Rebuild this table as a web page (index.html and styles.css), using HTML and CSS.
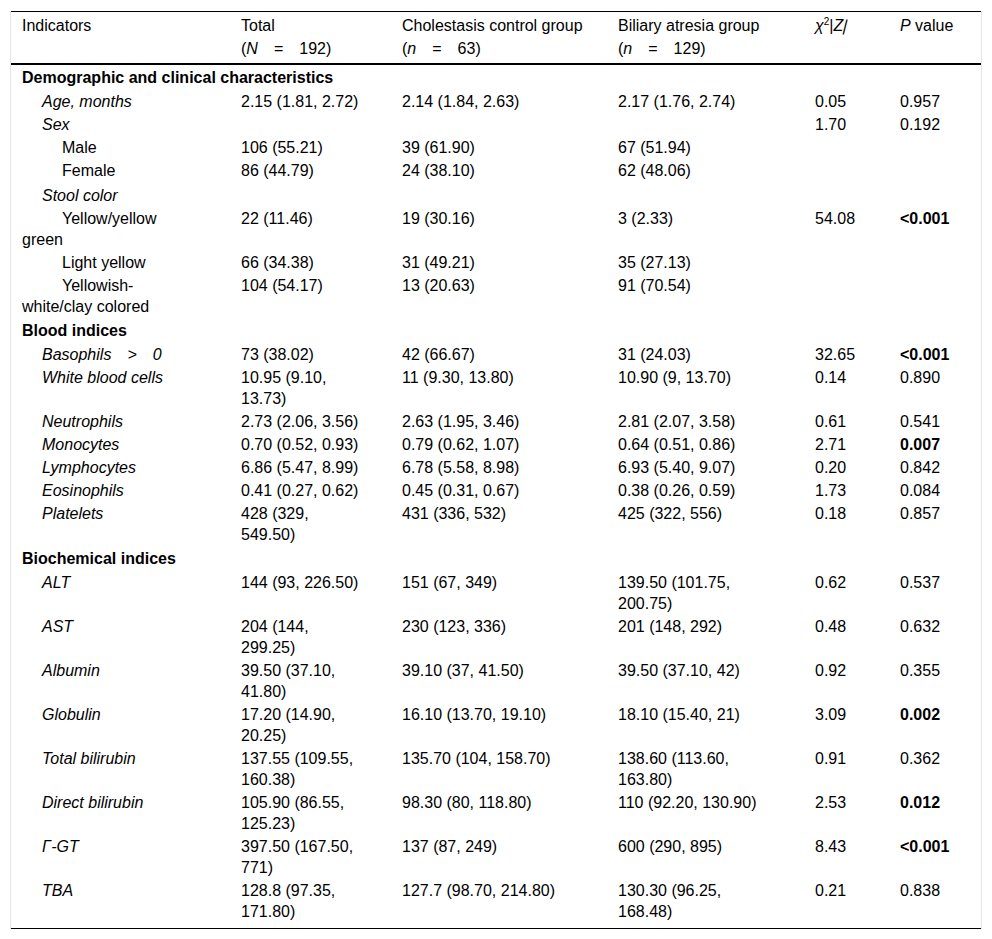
FILE: index.html
```html
<!DOCTYPE html>
<html lang="en">
<head>
<meta charset="utf-8">
<title>Table</title>
<link rel="stylesheet" href="styles.css">
</head>
<body>
<div class="wrap">
<table class="data">
<colgroup>
<col class="c1"><col class="c2"><col class="c3"><col class="c4"><col class="c5"><col class="c6">
</colgroup>
<thead>
<tr>
<th>Indicators</th>
<th>Total<br>(<i>N</i>&emsp;=&emsp;192)</th>
<th>Cholestasis control group<br>(<i>n</i>&emsp;=&emsp;63)</th>
<th>Biliary atresia group<br>(<i>n</i>&emsp;=&emsp;129)</th>
<th><i>χ</i><sup>2</sup>|<i>Z<span class="slant">|</span></i></th>
<th><i>P</i> value</th>
</tr>
</thead>
<tbody>
<tr><td colspan="6" class="section">Demographic and clinical characteristics</td></tr>
<tr><td class="l1"><i>Age, months</i></td><td>2.15 (1.81, 2.72)</td><td>2.14 (1.84, 2.63)</td><td>2.17 (1.76, 2.74)</td><td>0.05</td><td>0.957</td></tr>
<tr><td class="l1"><i>Sex</i></td><td></td><td></td><td></td><td>1.70</td><td>0.192</td></tr>
<tr><td class="l2">Male</td><td>106 (55.21)</td><td>39 (61.90)</td><td>67 (51.94)</td><td></td><td></td></tr>
<tr><td class="l2">Female</td><td>86 (44.79)</td><td>24 (38.10)</td><td>62 (48.06)</td><td></td><td></td></tr>
<tr class="sub"><td class="l1"><i>Stool color</i></td><td></td><td></td><td></td><td></td><td></td></tr>
<tr><td class="l2">Yellow/yellow green</td><td>22 (11.46)</td><td>19 (30.16)</td><td>3 (2.33)</td><td>54.08</td><td><b>&lt;0.001</b></td></tr>
<tr><td class="l2">Light yellow</td><td>66 (34.38)</td><td>31 (49.21)</td><td>35 (27.13)</td><td></td><td></td></tr>
<tr><td class="l2">Yellowish-white/clay colored</td><td>104 (54.17)</td><td>13 (20.63)</td><td>91 (70.54)</td><td></td><td></td></tr>
<tr><td colspan="6" class="section">Blood indices</td></tr>
<tr><td class="l1"><i>Basophils&emsp;&gt;&emsp;0</i></td><td>73 (38.02)</td><td>42 (66.67)</td><td>31 (24.03)</td><td>32.65</td><td><b>&lt;0.001</b></td></tr>
<tr><td class="l1"><i>White blood cells</i></td><td>10.95 (9.10, 13.73)</td><td>11 (9.30, 13.80)</td><td>10.90 (9, 13.70)</td><td>0.14</td><td>0.890</td></tr>
<tr><td class="l1"><i>Neutrophils</i></td><td>2.73 (2.06, 3.56)</td><td>2.63 (1.95, 3.46)</td><td>2.81 (2.07, 3.58)</td><td>0.61</td><td>0.541</td></tr>
<tr><td class="l1"><i>Monocytes</i></td><td>0.70 (0.52, 0.93)</td><td>0.79 (0.62, 1.07)</td><td>0.64 (0.51, 0.86)</td><td>2.71</td><td><b>0.007</b></td></tr>
<tr><td class="l1"><i>Lymphocytes</i></td><td>6.86 (5.47, 8.99)</td><td>6.78 (5.58, 8.98)</td><td>6.93 (5.40, 9.07)</td><td>0.20</td><td>0.842</td></tr>
<tr><td class="l1"><i>Eosinophils</i></td><td>0.41 (0.27, 0.62)</td><td>0.45 (0.31, 0.67)</td><td>0.38 (0.26, 0.59)</td><td>1.73</td><td>0.084</td></tr>
<tr><td class="l1"><i>Platelets</i></td><td>428 (329, 549.50)</td><td>431 (336, 532)</td><td>425 (322, 556)</td><td>0.18</td><td>0.857</td></tr>
<tr><td colspan="6" class="section">Biochemical indices</td></tr>
<tr><td class="l1"><i>ALT</i></td><td>144 (93, 226.50)</td><td>151 (67, 349)</td><td>139.50 (101.75, 200.75)</td><td>0.62</td><td>0.537</td></tr>
<tr><td class="l1"><i>AST</i></td><td>204 (144, 299.25)</td><td>230 (123, 336)</td><td>201 (148, 292)</td><td>0.48</td><td>0.632</td></tr>
<tr><td class="l1"><i>Albumin</i></td><td>39.50 (37.10, 41.80)</td><td>39.10 (37, 41.50)</td><td>39.50 (37.10, 42)</td><td>0.92</td><td>0.355</td></tr>
<tr><td class="l1"><i>Globulin</i></td><td>17.20 (14.90, 20.25)</td><td>16.10 (13.70, 19.10)</td><td>18.10 (15.40, 21)</td><td>3.09</td><td><b>0.002</b></td></tr>
<tr><td class="l1"><i>Total bilirubin</i></td><td>137.55 (109.55, 160.38)</td><td>135.70 (104, 158.70)</td><td>138.60 (113.60, 163.80)</td><td>0.91</td><td>0.362</td></tr>
<tr><td class="l1"><i>Direct bilirubin</i></td><td>105.90 (86.55, 125.23)</td><td>98.30 (80, 118.80)</td><td>110 (92.20, 130.90)</td><td>2.53</td><td><b>0.012</b></td></tr>
<tr><td class="l1"><i>Γ-GT</i></td><td>397.50 (167.50, 771)</td><td>137 (87, 249)</td><td>600 (290, 895)</td><td>8.43</td><td><b>&lt;0.001</b></td></tr>
<tr class="last"><td class="l1"><i>TBA</i></td><td>128.8 (97.35, 171.80)</td><td>127.7 (98.70, 214.80)</td><td>130.30 (96.25, 168.48)</td><td>0.21</td><td>0.838</td></tr>
</tbody>
</table>
</div>
</body>
</html>
```

FILE: styles.css
```css
html, body {
  margin: 0;
  padding: 0;
  background: #fff;
}

body {
  font-family: "Liberation Sans", Arial, sans-serif;
  font-size: 16px;
  color: #000;
}

.wrap {
  width: 970px;
  margin: 11px 0 0 10px;
  border-left: 1px solid #e6e6e6;
  border-right: 1px solid #e6e6e6;
}

.data {
  width: 970px;
  table-layout: fixed;
  border-collapse: collapse;
  border-top: 1px solid #000;
  border-bottom: 1px solid #000;
}

.c1 { width: 219px; }
.c2 { width: 161px; }
.c3 { width: 216px; }
.c4 { width: 197px; }
.c5 { width: 85px; }
.c6 { width: 92px; }

.data th {
  font-weight: normal;
  text-align: left;
  vertical-align: top;
  white-space: nowrap;
  line-height: 23px;
  padding: 2px 30px 3px 11px;
  border-bottom: 2px solid #000;
}

.data th sup {
  font-size: 10px;
  line-height: 0;
  vertical-align: 6px;
}

.slant {
  display: inline-block;
  transform: skewX(-14deg);
}

.data td {
  text-align: left;
  vertical-align: top;
  line-height: 21px;
  padding: 1px 30px 1px 11px;
}

.data td.section {
  font-weight: bold;
  padding-top: 2px;
  padding-bottom: 2px;
}

.data tr.sub td {
  padding-top: 3px;
}

.data td.l1 {
  text-indent: 20px;
}

.data td.l2 {
  text-indent: 40px;
}

.data tr.last td {
  padding-bottom: 6px;
}
```
